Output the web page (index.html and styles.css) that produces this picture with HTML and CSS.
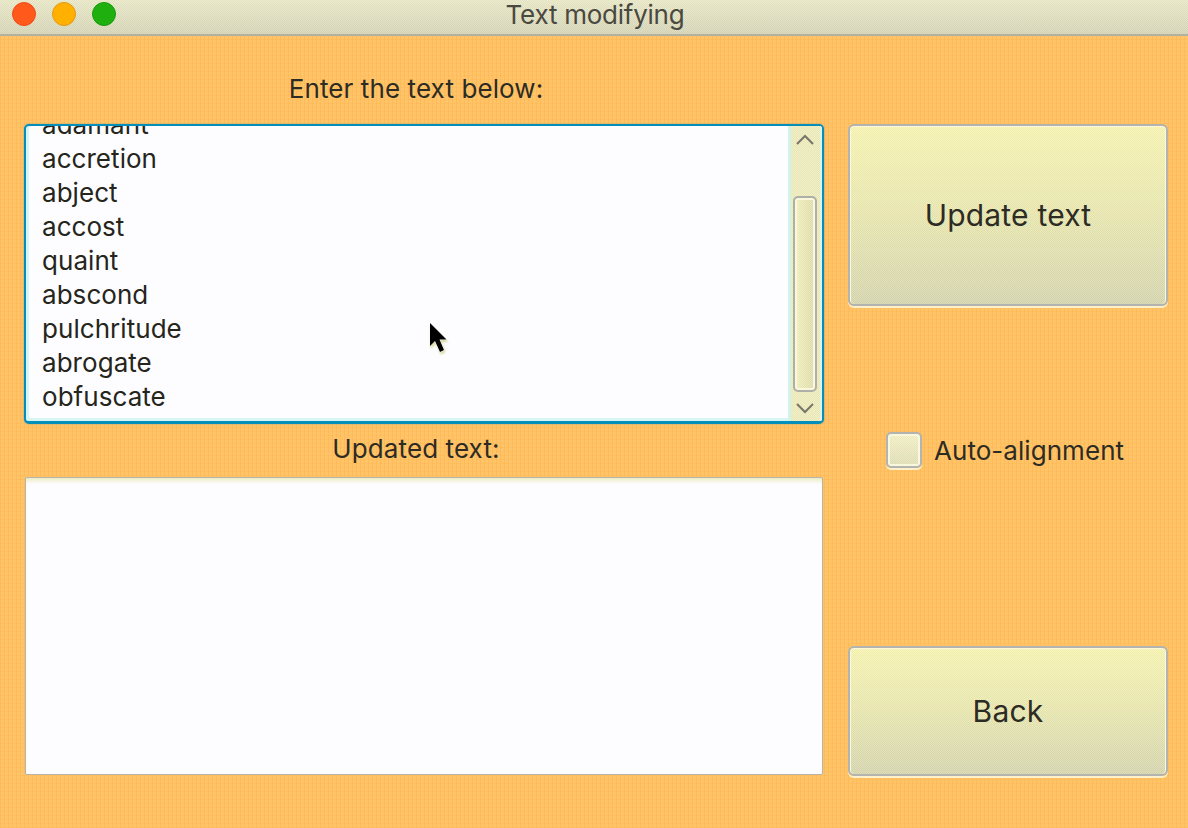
FILE: index.html
```html
<!DOCTYPE html>
<html lang="en">
<head>
<meta charset="utf-8">
<title>Text modifying</title>
<link rel="stylesheet" href="styles.css">
</head>
<body>
<div class="window">
  <header class="titlebar">
    <div class="lights"><span class="light close"></span><span class="light minimize"></span><span class="light maximize"></span></div>
    <h1 class="title">Text modifying</h1>
  </header>
  <main class="content">
    <section class="editors">
      <label class="label input-label">Enter the text below:</label>
      <div class="textarea focused">
        <div class="lines">
          <div>adamant</div><div>accretion</div><div>abject</div><div>accost</div><div>quaint</div><div>abscond</div><div>pulchritude</div><div>abrogate</div><div>obfuscate</div>
        </div>
        <div class="scrollbar">
          <svg class="arrow" viewBox="0 0 16 9"><path d="M0 9 L8 1 L16 9"/></svg>
          <div class="track"><div class="thumb"></div></div>
          <svg class="arrow" viewBox="0 0 16 9"><path d="M0 1 L8 9 L16 1"/></svg>
        </div>
      </div>
      <label class="label output-label">Updated text:</label>
      <div class="textarea output"></div>
    </section>
    <aside class="actions">
      <button class="button update">Update text</button>
      <label class="check"><span class="box"></span><span class="check-text">Auto-alignment</span></label>
      <button class="button back">Back</button>
    </aside>
  </main>
  <svg class="cursor" viewBox="0 0 24 34"><path d="M3 2 V25 L8 20 L13 31 L17 29 L12.500 18.500 H19.500 Z"/></svg>
</div>
</body>
</html>
```
FILE: styles.css
```css
* { box-sizing: border-box; }
body { margin: 0; font-family: Inter, "Liberation Sans", sans-serif; color: #2d2c24; }
.window {
  --grain: repeating-conic-gradient(rgba(255,255,255,.22) 0 25%, rgba(190,190,150,.12) 0 50%);
  position: relative; width: 1188px; height: 828px; overflow: hidden;
  background-color: #ffc468;
  background-image: repeating-linear-gradient(90deg, rgba(255,160,60,.26) 0 1px, transparent 1px 4px), repeating-linear-gradient(0deg, rgba(255,170,70,.2) 0 1px, transparent 1px 4px);
}
.titlebar {
  height: 36px; display: grid; grid-template-columns: 1fr auto 1fr;
  background: var(--grain) 0 0 / 2px 2px, linear-gradient(#e9e8c6, #d3d2b4); border-bottom: 2px solid #b2b1a2;
}
.lights { display: flex; gap: 16px; padding: 2px 0 0 12px; }
.light { width: 24px; height: 24px; border-radius: 50%; border: 1px solid; }
.close { background: #ff5a1c; border-color: #f04a1c; }
.minimize { background: #ffb000; border-color: #e09a14; }
.maximize { background: #1fb010; border-color: #189a10; }
.title { margin: 0; padding-left: 2px; font-size: 26px; font-weight: 400; line-height: 30px; letter-spacing: -.25px; color: #4a493f; white-space: nowrap; }
.content { display: grid; grid-template-columns: 800px 320px; column-gap: 24px; padding-left: 24px; }
.label { display: block; text-align: center; font-size: 26px; letter-spacing: .1px; white-space: nowrap; padding-right: 16px; }
.input-label { height: 88px; padding-top: 37px; line-height: 32px; }
.output-label { height: 53px; padding-top: 9px; line-height: 32px; }
.textarea { background: #fdfdff; }
.focused {
  height: 300px; border: 2px solid #048fba; border-bottom-width: 3px; border-radius: 5px; display: flex; overflow: hidden;
  box-shadow: inset 3px 0 #d5f6f4, inset 0 -3px #d5f6f4, 0 0 2px #9aa080;
}
.lines { flex: 1; height: 295px; overflow: hidden; padding-left: 16px; font-size: 26px; letter-spacing: .05px; line-height: 34px; color: #26251c; }
.lines div:first-child { margin-top: -18px; }
.scrollbar {
  width: 34px; display: flex; flex-direction: column; align-items: center;
  padding: 9px 2px 9px 1px; background: var(--grain) 0 0 / 2px 2px, #eeecb8; border-left: 3px solid #d2f2ec; border-right: 2px solid #dff4e6;
}
.arrow { width: 16px; height: 9px; flex: none; fill: none; stroke: #77766a; stroke-width: 2; overflow: visible; }
.track { flex: 1; padding-top: 52px; }
.thumb { width: 24px; height: 196px; border: 2px solid #afafa9; border-radius: 5px; background: var(--grain) 0 0 / 2px 2px, linear-gradient(90deg, #f3f1bc, #dddba8); box-shadow: inset 0 0 0 2px #f9f8dc; }
.output { height: 298px; margin: 0 1px 0 1px; border: 1px solid #b5b5aa; border-radius: 2px; box-shadow: inset 0 6px 4px -3px #ecebc4; }
.actions { padding-top: 88px; }
.button {
  display: block; width: 320px; border: 2px solid #b3b4af; border-radius: 6px; padding: 0; color: #2d2c24;
  font: 400 30px Inter, "Liberation Sans", sans-serif; letter-spacing: .2px;
  background: var(--grain) 0 0 / 2px 2px, linear-gradient(#f8f5ae, #e9e7ac 48%, #d4d4ac);
  box-shadow: inset 0 1px #fbf9d8, inset 1px 0 #fbf9d8, inset -1px 0 #fbf9d8, 0 2px #fff0c8;
}
.update { height: 182px; }
.check { height: 36px; margin: 126px 0 178px 38px; display: flex; align-items: center; gap: 12px; font-size: 26px; letter-spacing: .05px; white-space: nowrap; }
.check-text { padding-top: 1px; }
.box { width: 36px; height: 36px; border: 2px solid #b3b4af; border-radius: 5px; background: var(--grain) 0 0 / 2px 2px, linear-gradient(#f3f1c4, #dfddb2); box-shadow: inset 0 0 0 2px #faf8dc, 0 2px #fff0c8; }
.back { height: 130px; }
.cursor { position: absolute; left: 427px; top: 321px; width: 24px; height: 34px; overflow: visible; fill: #000; stroke: #fff; stroke-width: 1; paint-order: stroke; filter: drop-shadow(1px 2px 1px #d9d8a0); }
```
